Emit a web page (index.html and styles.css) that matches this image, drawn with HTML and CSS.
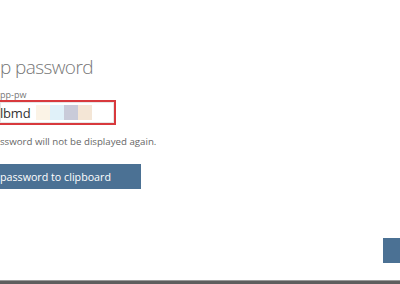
FILE: index.html
```html
<!DOCTYPE html>
<html lang="en">
<head>
  <meta charset="UTF-8" />
  <title>App password</title>
  <link rel="stylesheet" href="styles.css">
</head>
<body>
  <div class="page">
    <div class="content">
      <h1 class="title">p password</h1>

      <div class="field">
        <div class="label">pp-pw</div>
        <div class="value-box">
          <span class="value">lbmd</span>
          <span class="blur">
            <span class="b1"></span>
            <span class="b2"></span>
            <span class="b3"></span>
            <span class="b4"></span>
          </span>
        </div>
      </div>

      <p class="note">ssword will not be displayed again.</p>

      <button class="copy-btn">password to clipboard</button>
    </div>

    <div class="actions">
      <button class="done-btn"></button>
    </div>
  </div>
  <div class="bottom-bar"></div>
</body>
</html>
```

FILE: styles.css
```css
* { box-sizing: border-box; margin: 0; padding: 0; }

html, body {
  width: 400px;
  height: 284px;
  overflow: hidden;
  background: #fff;
  font-family: 'Open Sans', sans-serif;
}

.page {
  height: 280px;
  display: flex;
  flex-direction: column;
}

.content {
  padding-top: 55px;
  flex: 1;
}

.title {
  font-size: 19px;
  font-weight: 300;
  color: #777;
  line-height: 24px;
  letter-spacing: -0.6px;
  margin-bottom: 11px;
}

.label {
  font-size: 9px;
  color: #777;
  line-height: 10px;
}

.value-box {
  width: 116px;
  height: 25px;
  border: 2px solid #d8393d;
  border-left: none;
  display: flex;
  align-items: center;
  gap: 6px;
  box-shadow: inset 0 0 0 1px #e6e6e6;
}

.value {
  font-size: 13px;
  color: #333;
  letter-spacing: -0.2px;
}

.blur {
  display: flex;
  height: 15px;
}

.blur span { width: 14px; height: 15px; }
.b1 { background: #fbf3e6; }
.b2 { background: #e0f1f9; }
.b3 { background: #c9cbd9; }
.b4 { background: #f4e6d6; }

.note {
  font-size: 9.7px;
  color: #666;
  margin-top: 11px;
  line-height: 12px;
}

.copy-btn {
  margin-top: 16px;
  width: 141px;
  height: 25px;
  border: none;
  background: #4b7194;
  color: #fff;
  font-family: 'Open Sans', sans-serif;
  font-size: 10.7px;
  text-align: left;
  padding-left: 0;
}

.actions {
  display: flex;
  justify-content: flex-end;
  padding-bottom: 17px;
}

.done-btn {
  width: 17px;
  height: 25px;
  border: none;
  background: #4b7194;
}

.bottom-bar {
  height: 4px;
  background: #5e5e5e;
  border-top: 1px solid #9a9a9a;
}
```
